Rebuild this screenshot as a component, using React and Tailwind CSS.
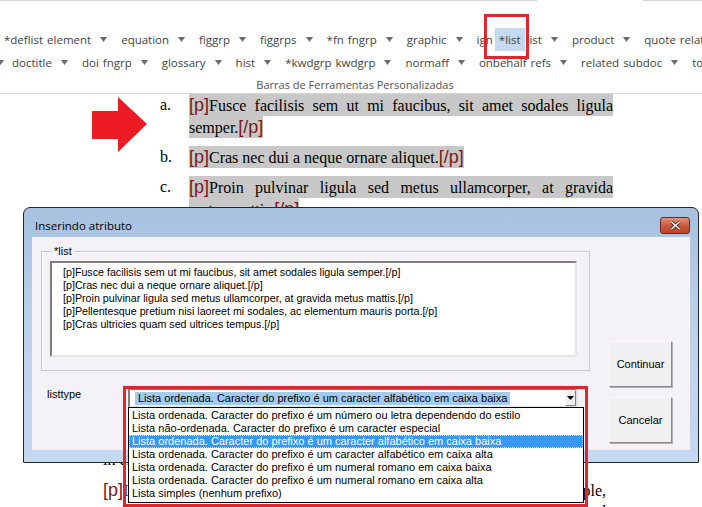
import React from "react";

const row1 = ["*deflist", "element", "v", "equation", "v", "figgrp", "v", "figgrps", "v", "*fn", "fngrp", "v", "graphic", "v", "ign", "*list", "list", "v", "product", "v", "quote", "related"];
const row2 = ["v", "doctitle", "v", "doi", "fngrp", "v", "glossary", "v", "hist", "v", "*kwdgrp", "kwdgrp", "v", "normaff", "v", "onbehalf", "refs", "v", "related", "subdoc", "v", "toc"];

const listOptions = [
  "Lista ordenada. Caracter do prefixo é um número ou letra dependendo do estilo",
  "Lista não-ordenada. Caracter do prefixo é um caracter especial",
  "Lista ordenada. Caracter do prefixo é um caracter alfabético em caixa baixa",
  "Lista ordenada. Caracter do prefixo é um caracter alfabético em caixa alta",
  "Lista ordenada. Caracter do prefixo é um numeral romano em caixa baixa",
  "Lista ordenada. Caracter do prefixo é um numeral romano em caixa alta",
  "Lista simples (nenhum prefixo)",
];

const textLines = [
  "[p]Fusce facilisis sem ut mi faucibus, sit amet sodales ligula semper.[/p]",
  "[p]Cras nec dui a neque ornare aliquet.[/p]",
  "[p]Proin pulvinar ligula sed metus ullamcorper, at gravida metus mattis.[/p]",
  "[p]Pellentesque pretium nisi laoreet mi sodales, ac elementum mauris porta.[/p]",
  "[p]Cras ultricies quam sed ultrices tempus.[/p]",
];

const Arrow = ({ first }) => (
  <span className={first ? "-ml-[5px] mr-[6px] flex" : "ml-[7px] mr-[12px] flex"}>
    <svg width="7" height="5" viewBox="0 0 7 5">
      <polygon points="0,0 7,0 3.5,5" fill="#6b6b6b" />
    </svg>
  </span>
);

const RibbonRow = ({ items }) => (
  <div className="flex items-center h-[23px] pl-[2px] whitespace-nowrap overflow-hidden">
    {items.map((it, i) =>
      it === "v" ? (
        <Arrow key={i} first={i === 0} />
      ) : it === "*list" ? (
        <span key={i} className="self-stretch flex items-center px-[4px] bg-[#c5d9f0]">
          {it}
        </span>
      ) : (
        <span key={i} className="px-[2px]">
          {it}
        </span>
      )
    )}
  </div>
);

const P = () => <span className="font-['Liberation_Sans'] text-[18px] leading-[22px] text-[#7a1616]">[p]</span>;
const EP = () => <span className="font-['Liberation_Sans'] text-[18px] leading-[22px] text-[#7a1616]">[/p]</span>;

const App = () => {
  return (
    <div className="relative w-[702px] h-[507px] overflow-hidden bg-white">
      {/* Ribbon */}
      <div className="h-[94px] border-b border-[#d6d6d6] font-['Open_Sans'] text-[11.5px] text-[#444]">
        <div className="flex h-px">
          <div className="w-[537px] bg-[#d4d4d4]" />
          <div className="w-[106px]" />
          <div className="flex-1 bg-[#d4d4d4]" />
        </div>
        <div className="mt-[27px]">
          <RibbonRow items={row1} />
          <RibbonRow items={row2} />
        </div>
        <div className="mt-[3px] h-[16px] leading-[16px] pl-[8px] text-center text-[11px] text-[#555]">Barras de Ferramentas Personalizadas</div>
      </div>

      {/* Document */}
      <div className="pl-[103px] font-['Liberation_Serif'] text-[16px] leading-[22px] text-black">
        <div className="ml-[57px] w-[453px] flex flex-col gap-[8px]">
          <div className="flex">
            <div className="w-[29px]">a.</div>
            <div className="w-[424px]">
              <div className="h-[22px] bg-[#c8c8c8] text-justify [text-align-last:justify]">
                <P />Fusce facilisis sem ut mi faucibus, sit amet sodales ligula
              </div>
              <div className="h-[22px]">
                <span className="inline-block h-[22px] bg-[#c8c8c8]">semper.<EP /></span>
              </div>
            </div>
          </div>
          <div className="flex">
            <div className="w-[29px]">b.</div>
            <div className="w-[424px] h-[22px]">
              <span className="inline-block h-[22px] bg-[#c8c8c8]"><P />Cras nec dui a neque ornare aliquet.<EP /></span>
            </div>
          </div>
          <div className="flex">
            <div className="w-[29px]">c.</div>
            <div className="w-[424px]">
              <div className="h-[22px] bg-[#c8c8c8] text-justify [text-align-last:justify]">
                <P />Proin pulvinar ligula sed metus ullamcorper, at gravida
              </div>
              <div className="h-[22px]">
                <span className="inline-block h-[22px] bg-[#c8c8c8]">metus mattis.<EP /></span>
              </div>
            </div>
          </div>
        </div>
        <div className="mt-[229px] h-[22px] w-[503px] whitespace-nowrap overflow-hidden">
          in eleifend lectus nec tortor vehicula, non finibus ipsum pharetra.
        </div>
        <div className="mt-[8px] w-[503px]">
          <div className="h-[22px] text-justify [text-align-last:justify]">
            <P />Integer porta massa nec dui lacinia, quis fermentum nisi simple,
          </div>
          <div className="h-[22px] text-justify [text-align-last:justify]">and ipsum at ligula congue vehicula, vitae tempor enim blandit nunc sed diam, in nes;</div>
        </div>
      </div>

      {/* Red arrow annotation */}
      <svg className="absolute left-[92px] top-[97px]" width="56" height="56" viewBox="0 0 56 56">
        <polygon points="0,14 26,14 26,0 55,27 26,55 26,42 0,42" fill="#ed1c24" />
      </svg>

      {/* Red box around *list */}
      <div className="absolute left-[484px] top-[14px] w-[45px] h-[45px] border-[3px] border-[#dc2630]" />

      {/* Dialog */}
      <div className="absolute left-[23px] top-[207px] w-[676px] h-[256px] rounded-t-[7px] border border-[#262626] bg-gradient-to-b from-[#a7c1df] via-[#bed3eb] to-[#c4d8ef] flex flex-col font-['Liberation_Sans'] text-[11px] text-black">
        <div className="h-[29px] flex items-start">
          <div className="pl-[11px] pt-[10px] font-['Open_Sans'] text-[11.5px] leading-[16px]">Inserindo atributo</div>
          <div className="ml-auto mr-[8px] mt-[9px] w-[30px] h-[17px] rounded-[3px] border border-[#6e2a20] bg-gradient-to-b from-[#e0937f] via-[#cc5a40] to-[#c0412a] flex items-center justify-center">
            <svg width="11" height="9" viewBox="0 0 11 9">
              <path d="M1.5 1 L9.5 8 M9.5 1 L1.5 8" stroke="#5a1d14" strokeWidth="3" />
              <path d="M1.5 1 L9.5 8 M9.5 1 L1.5 8" stroke="#ffffff" strokeWidth="1.6" />
            </svg>
          </div>
        </div>
        <div className="mx-[8px] h-[213px] bg-[#f4f2f6] flex">
          <div className="pl-[9px] pt-[14px]">
            <div className="relative w-[549px] h-[120px] border border-[#c9c9ce] shadow-[inset_1px_1px_0_#ffffff] pl-[8px] pt-[9px]">
              <span className="absolute -top-[8px] left-[10px] px-[2px] bg-[#f4f2f6] leading-[14px]">*list</span>
              <div className="w-[527px] h-[96px] bg-white border-2 border-t-[#7f7f7f] border-l-[#7f7f7f] border-r-[#e4e4e4] border-b-[#e4e4e4] pl-[11px] pt-[3px] text-[10.7px] leading-[13px] whitespace-nowrap overflow-hidden">
                {textLines.map((t, i) => (
                  <div key={i}>{t}</div>
                ))}
              </div>
            </div>
            <div className="mt-[17px] flex items-start">
              <div className="ml-[6px] w-[81px] leading-[13px]">listtype</div>
              <div className="relative w-[450px] h-[20px] bg-white border-2 border-t-[#7f7f7f] border-l-[#7f7f7f] border-r-[#e4e4e4] border-b-[#e4e4e4] flex items-center">
                <div className="pl-[5px] flex-1 whitespace-nowrap overflow-hidden">
                  <span className="inline-block px-[3px] h-[13px] leading-[13px] bg-[#a4cbef]">{listOptions[2]}</span>
                </div>
                <div className="w-[11px] h-[16px] bg-[#f0f0f0] border border-t-white border-l-white border-r-[#808080] border-b-[#808080] flex items-center justify-center">
                  <svg width="7" height="4" viewBox="0 0 7 4">
                    <polygon points="0,0 7,0 3.5,4" fill="#000" />
                  </svg>
                </div>
                <div className="absolute -left-[2px] top-[17px] w-[456px] h-[96px] border border-black bg-white z-10 pt-[1px]">
                  {listOptions.map((o, i) => (
                    <div
                      key={i}
                      className={
                        i === 2
                          ? "h-[13px] leading-[11px] pl-[2px] bg-[#3399ff] text-white border border-dotted border-[#f5e58a] whitespace-nowrap"
                          : "h-[13px] leading-[13px] pl-[3px] whitespace-nowrap"
                      }
                    >
                      {o}
                    </div>
                  ))}
                </div>
              </div>
            </div>
          </div>
          <div className="ml-[19px] pt-[104px] flex flex-col gap-[10px]">
            <button className="w-[63px] h-[46px] bg-[#f0eff2] border border-t-[#f8f8f8] border-l-[#f8f8f8] border-r-[#8a8a8a] border-b-[#8a8a8a] shadow-[1px_1px_0_#b0b0b0]">Continuar</button>
            <button className="w-[63px] h-[46px] bg-[#f0eff2] border border-t-[#f8f8f8] border-l-[#f8f8f8] border-r-[#8a8a8a] border-b-[#8a8a8a] shadow-[1px_1px_0_#b0b0b0]">Cancelar</button>
          </div>
        </div>
      </div>

      {/* Red box around listtype dropdown */}
      <div className="absolute left-[123px] top-[386px] w-[465px] h-[121px] border-[3px] border-[#dc2630] z-20" />
    </div>
  );
};

export default App;
